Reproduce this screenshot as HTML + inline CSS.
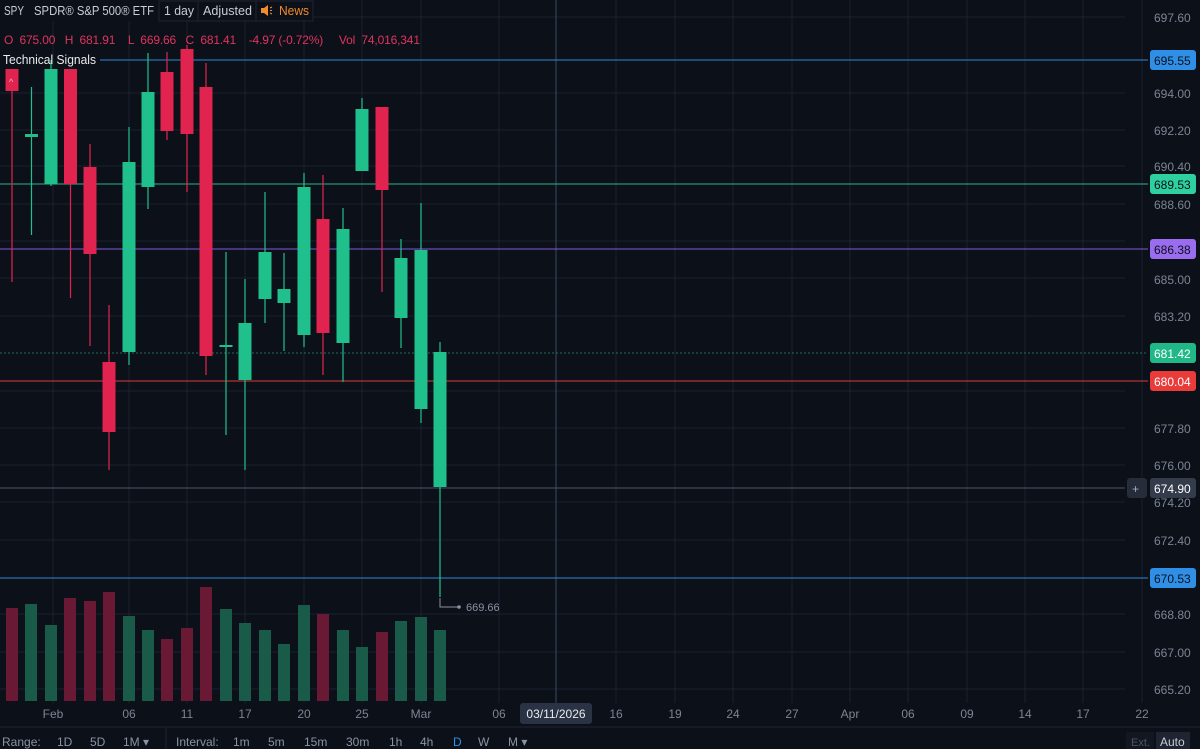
<!DOCTYPE html>
<html><head><meta charset="utf-8"><style>
body{margin:0;background:#0c1019;width:1200px;height:749px;overflow:hidden;font-family:"Liberation Sans",sans-serif;}
svg{position:absolute;left:0;top:0}
</style></head><body>
<svg width="1200" height="749" viewBox="0 0 1200 749" font-family="Liberation Sans, sans-serif">
<rect width="1200" height="749" fill="#0c1019"/>
<g stroke="#1b2130" stroke-width="1">
<line x1="0" y1="17" x2="1125" y2="17"/><line x1="0" y1="93" x2="1125" y2="93"/><line x1="0" y1="130" x2="1125" y2="130"/><line x1="0" y1="166" x2="1125" y2="166"/><line x1="0" y1="204" x2="1125" y2="204"/><line x1="0" y1="241" x2="1125" y2="241"/><line x1="0" y1="278" x2="1125" y2="278"/><line x1="0" y1="316" x2="1125" y2="316"/><line x1="0" y1="391" x2="1125" y2="391"/><line x1="0" y1="428" x2="1125" y2="428"/><line x1="0" y1="465" x2="1125" y2="465"/><line x1="0" y1="502" x2="1125" y2="502"/><line x1="0" y1="540" x2="1125" y2="540"/><line x1="0" y1="614" x2="1125" y2="614"/><line x1="0" y1="652" x2="1125" y2="652"/><line x1="0" y1="689" x2="1125" y2="689"/>
<line x1="53" y1="0" x2="53" y2="703"/><line x1="129" y1="0" x2="129" y2="703"/><line x1="187" y1="0" x2="187" y2="703"/><line x1="245" y1="0" x2="245" y2="703"/><line x1="304" y1="0" x2="304" y2="703"/><line x1="362" y1="0" x2="362" y2="703"/><line x1="421" y1="0" x2="421" y2="703"/><line x1="499" y1="0" x2="499" y2="703"/><line x1="616" y1="0" x2="616" y2="703"/><line x1="675" y1="0" x2="675" y2="703"/><line x1="733" y1="0" x2="733" y2="703"/><line x1="792" y1="0" x2="792" y2="703"/><line x1="850" y1="0" x2="850" y2="703"/><line x1="908" y1="0" x2="908" y2="703"/><line x1="967" y1="0" x2="967" y2="703"/><line x1="1025" y1="0" x2="1025" y2="703"/><line x1="1083" y1="0" x2="1083" y2="703"/><line x1="1142" y1="0" x2="1142" y2="703"/>
</g>
<line x1="556" y1="0" x2="556" y2="703" stroke="#3b4a5e"/>
<g>
<rect x="6" y="608" width="12" height="93" fill="#6a1934"/><rect x="25" y="604" width="12" height="97" fill="#1a5a48"/><rect x="45" y="625" width="12" height="76" fill="#1a5a48"/><rect x="64" y="598" width="12" height="103" fill="#6a1934"/><rect x="84" y="601" width="12" height="100" fill="#6a1934"/><rect x="103" y="592" width="12" height="109" fill="#6a1934"/><rect x="123" y="616" width="12" height="85" fill="#1a5a48"/><rect x="142" y="630" width="12" height="71" fill="#1a5a48"/><rect x="161" y="639" width="12" height="62" fill="#6a1934"/><rect x="181" y="628" width="12" height="73" fill="#6a1934"/><rect x="200" y="587" width="12" height="114" fill="#6a1934"/><rect x="220" y="609" width="12" height="92" fill="#1a5a48"/><rect x="239" y="623" width="12" height="78" fill="#1a5a48"/><rect x="259" y="630" width="12" height="71" fill="#1a5a48"/><rect x="278" y="644" width="12" height="57" fill="#1a5a48"/><rect x="298" y="605" width="12" height="96" fill="#1a5a48"/><rect x="317" y="614" width="12" height="87" fill="#6a1934"/><rect x="337" y="630" width="12" height="71" fill="#1a5a48"/><rect x="356" y="647" width="12" height="54" fill="#1a5a48"/><rect x="376" y="632" width="12" height="69" fill="#6a1934"/><rect x="395" y="621" width="12" height="80" fill="#1a5a48"/><rect x="415" y="617" width="12" height="84" fill="#1a5a48"/><rect x="434" y="630" width="12" height="71" fill="#1a5a48"/>
</g>
<line x1="100" y1="60" x2="1148" y2="60" stroke="#2f86d6"/>
<line x1="0" y1="184" x2="1148" y2="184" stroke="#2bb58e"/>
<line x1="0" y1="249" x2="1148" y2="249" stroke="#8357e0"/>
<line x1="0" y1="353" x2="1148" y2="353" stroke="#1f6e55" stroke-dasharray="2 2"/>
<line x1="0" y1="381" x2="1148" y2="381" stroke="#d93b3b"/>
<line x1="0" y1="488" x2="1125" y2="488" stroke="#4a5568"/>
<line x1="0" y1="578" x2="1148" y2="578" stroke="#2f86d6"/>
<g stroke-width="1.2">
<line x1="12" y1="69" x2="12" y2="282" stroke="#e0244f"/><rect x="5.5" y="69" width="13" height="22" fill="#e0244f"/>
<line x1="31.5" y1="87" x2="31.5" y2="235" stroke="#20c08c"/><rect x="25" y="134" width="13" height="3" fill="#20c08c"/>
<line x1="51" y1="60" x2="51" y2="186" stroke="#20c08c"/><rect x="44.5" y="69" width="13" height="115" fill="#20c08c"/>
<line x1="70.5" y1="69" x2="70.5" y2="298" stroke="#e0244f"/><rect x="64" y="69" width="13" height="115" fill="#e0244f"/>
<line x1="90" y1="144" x2="90" y2="346" stroke="#e0244f"/><rect x="83.5" y="167" width="13" height="87" fill="#e0244f"/>
<line x1="109" y1="305" x2="109" y2="470" stroke="#e0244f"/><rect x="102.5" y="362" width="13" height="70" fill="#e0244f"/>
<line x1="129" y1="127" x2="129" y2="365" stroke="#20c08c"/><rect x="122.5" y="162" width="13" height="190" fill="#20c08c"/>
<line x1="148" y1="53" x2="148" y2="209" stroke="#20c08c"/><rect x="141.5" y="92" width="13" height="95" fill="#20c08c"/>
<line x1="167" y1="52" x2="167" y2="140" stroke="#e0244f"/><rect x="160.5" y="72" width="13" height="59" fill="#e0244f"/>
<line x1="187" y1="45" x2="187" y2="192" stroke="#e0244f"/><rect x="180.5" y="49" width="13" height="85" fill="#e0244f"/>
<line x1="206" y1="63" x2="206" y2="375" stroke="#e0244f"/><rect x="199.5" y="87" width="13" height="269" fill="#e0244f"/>
<line x1="226" y1="252" x2="226" y2="435" stroke="#20c08c"/><rect x="219.5" y="345" width="13" height="2" fill="#20c08c"/>
<line x1="245" y1="279" x2="245" y2="470" stroke="#20c08c"/><rect x="238.5" y="323" width="13" height="57" fill="#20c08c"/>
<line x1="265" y1="192" x2="265" y2="323" stroke="#20c08c"/><rect x="258.5" y="252" width="13" height="47" fill="#20c08c"/>
<line x1="284" y1="253" x2="284" y2="351" stroke="#20c08c"/><rect x="277.5" y="289" width="13" height="14" fill="#20c08c"/>
<line x1="304" y1="173" x2="304" y2="347" stroke="#20c08c"/><rect x="297.5" y="187" width="13" height="148" fill="#20c08c"/>
<line x1="323" y1="175" x2="323" y2="375" stroke="#e0244f"/><rect x="316.5" y="219" width="13" height="114" fill="#e0244f"/>
<line x1="343" y1="208" x2="343" y2="382" stroke="#20c08c"/><rect x="336.5" y="229" width="13" height="114" fill="#20c08c"/>
<line x1="362" y1="98" x2="362" y2="171" stroke="#20c08c"/><rect x="355.5" y="109" width="13" height="62" fill="#20c08c"/>
<line x1="382" y1="107" x2="382" y2="292" stroke="#e0244f"/><rect x="375.5" y="107" width="13" height="83" fill="#e0244f"/>
<line x1="401" y1="239" x2="401" y2="348" stroke="#20c08c"/><rect x="394.5" y="258" width="13" height="60" fill="#20c08c"/>
<line x1="421" y1="203" x2="421" y2="423" stroke="#20c08c"/><rect x="414.5" y="250" width="13" height="159" fill="#20c08c"/>
<line x1="440" y1="342" x2="440" y2="597" stroke="#20c08c"/><rect x="433.5" y="352" width="13" height="135" fill="#20c08c"/>
</g>
<path d="M440 598 V607 H458" stroke="#8a93a3" fill="none"/><circle cx="459" cy="607" r="1.8" fill="#8a93a3"/>
<text x="466" y="611" font-size="11" fill="#8a93a3">669.66</text>
<text x="9" y="85" font-size="9" fill="#ffb3c4">^</text>
<rect x="0" y="0" width="313" height="21" fill="#0c1019"/>
<g font-size="13" fill="#c8ccd4">
<text x="4" y="15" textLength="20" lengthAdjust="spacingAndGlyphs">SPY</text>
<text x="34" y="15" textLength="120" lengthAdjust="spacingAndGlyphs">SPDR® S&amp;P 500® ETF</text>
<text x="164" y="15" textLength="30" lengthAdjust="spacingAndGlyphs">1 day</text>
<text x="203" y="15" textLength="49" lengthAdjust="spacingAndGlyphs">Adjusted</text>
</g>
<rect x="159" y="1" width="39" height="20" fill="none" stroke="#1f2533"/>
<rect x="198" y="1" width="58" height="20" fill="none" stroke="#1f2533"/>
<rect x="256" y="1" width="57" height="20" fill="none" stroke="#1f2533"/>
<path d="M261 8 h3 l4 -3 v11 l-4 -3 h-3z" fill="#f08c2c"/>
<path d="M270 8 l2 -1 M270 10.5 h2 M270 13 l2 1" stroke="#f08c2c" stroke-width="1"/>
<text x="279" y="15" font-size="13" fill="#f08c2c" textLength="30" lengthAdjust="spacingAndGlyphs">News</text>
<text x="4" y="44" font-size="12" fill="#e0345c" xml:space="preserve" textLength="416" lengthAdjust="spacing">O  675.00   H  681.91    L  669.66   C  681.41    -4.97 (-0.72%)     Vol  74,016,341</text>
<text x="3" y="64" font-size="13" fill="#e8eaee" textLength="93" lengthAdjust="spacingAndGlyphs">Technical Signals</text>
<g font-size="12" fill="#7c8494">
<text x="1154" y="22">697.60</text><text x="1154" y="98">694.00</text><text x="1154" y="135">692.20</text><text x="1154" y="171">690.40</text><text x="1154" y="209">688.60</text><text x="1154" y="284">685.00</text><text x="1154" y="321">683.20</text><text x="1154" y="433">677.80</text><text x="1154" y="470">676.00</text><text x="1154" y="507">674.20</text><text x="1154" y="545">672.40</text><text x="1154" y="619">668.80</text><text x="1154" y="657">667.00</text><text x="1154" y="694">665.20</text>
</g>
<g font-size="12">
<rect x="1150" y="50" width="46" height="20" rx="3" fill="#2f8fe6"/><text x="1154" y="65" fill="#0c1019">695.55</text>
<rect x="1150" y="174" width="46" height="20" rx="3" fill="#2fd0a0"/><text x="1154" y="189" fill="#0c1019">689.53</text>
<rect x="1150" y="239" width="46" height="20" rx="3" fill="#9a6cf0"/><text x="1154" y="254" fill="#0c1019">686.38</text>
<rect x="1150" y="343" width="46" height="20" rx="3" fill="#1fb886"/><text x="1154" y="358" fill="#fff">681.42</text>
<rect x="1150" y="371" width="46" height="20" rx="3" fill="#ea3b3b"/><text x="1154" y="386" fill="#fff">680.04</text>
<rect x="1150" y="478" width="46" height="20" rx="3" fill="#343c4c"/><text x="1154" y="493" fill="#fff">674.90</text>
<rect x="1127" y="478" width="20" height="20" rx="3" fill="#252c3a"/><text x="1132" y="493" fill="#aab">+</text>
<rect x="1150" y="568" width="46" height="20" rx="3" fill="#2f8fe6"/><text x="1154" y="583" fill="#0c1019">670.53</text>
</g>
<g font-size="12" fill="#7c8494" text-anchor="middle">
<text x="53" y="718">Feb</text><text x="129" y="718">06</text><text x="187" y="718">11</text><text x="245" y="718">17</text><text x="304" y="718">20</text><text x="362" y="718">25</text><text x="421" y="718">Mar</text><text x="499" y="718">06</text><text x="616" y="718">16</text><text x="675" y="718">19</text><text x="733" y="718">24</text><text x="792" y="718">27</text><text x="850" y="718">Apr</text><text x="908" y="718">06</text><text x="967" y="718">09</text><text x="1025" y="718">14</text><text x="1083" y="718">17</text><text x="1142" y="718">22</text>
</g>
<rect x="520" y="703" width="72" height="21" rx="3" fill="#2a3344"/>
<text x="556" y="718" font-size="12" fill="#e8eaee" text-anchor="middle">03/11/2026</text>
<line x1="0" y1="727" x2="1200" y2="727" stroke="#1f2533"/>
<line x1="166" y1="728" x2="166" y2="749" stroke="#1f2533"/>
<g font-size="12" fill="#8a93a3">
<text x="2" y="746">Range:</text><text x="57" y="746">1D</text><text x="90" y="746">5D</text><text x="123" y="746">1M ▾</text>
<text x="176" y="746">Interval:</text><text x="233" y="746">1m</text><text x="268" y="746">5m</text><text x="304" y="746">15m</text><text x="346" y="746">30m</text><text x="389" y="746">1h</text><text x="420" y="746">4h</text><text x="453" y="746" fill="#2f8fe6">D</text><text x="478" y="746">W</text><text x="508" y="746">M ▾</text>
</g>
<rect x="1126" y="732" width="28" height="17" fill="#121722"/><text x="1131" y="746" font-size="11" fill="#4c5464">Ext.</text>
<rect x="1156" y="732" width="34" height="17" fill="#1e2432"/><text x="1160" y="746" font-size="12" fill="#c8ccd4">Auto</text>
</svg>
</body></html>
